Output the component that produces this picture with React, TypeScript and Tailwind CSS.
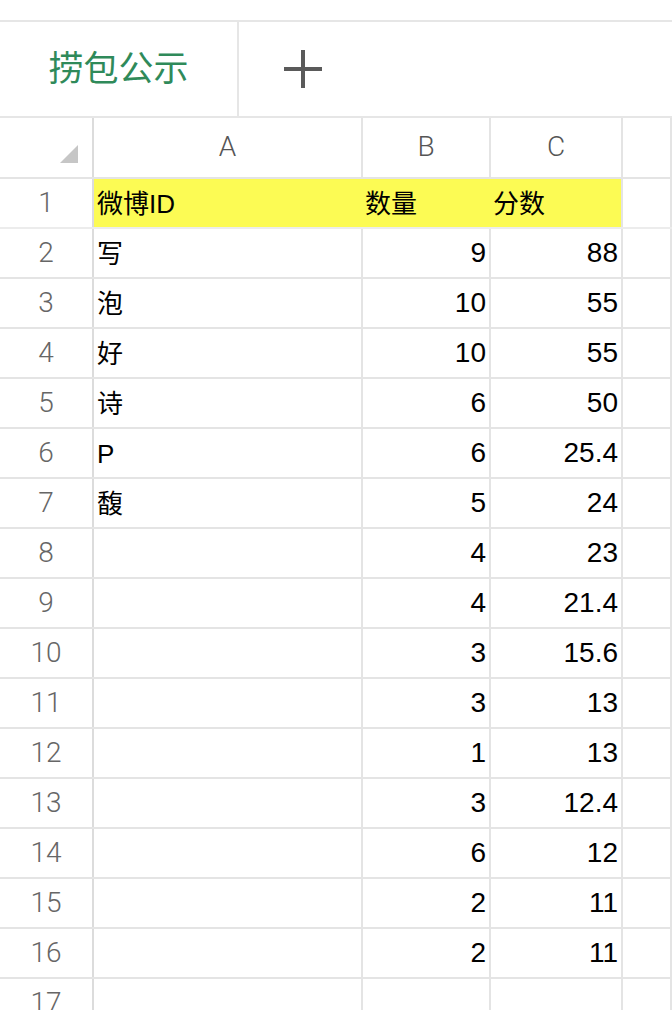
const rows: [string, string, string][] = [
  ['写', '9', '88'],
  ['泡', '10', '55'],
  ['好', '10', '55'],
  ['诗', '6', '50'],
  ['P', '6', '25.4'],
  ['馥', '5', '24'],
  ['', '4', '23'],
  ['', '4', '21.4'],
  ['', '3', '15.6'],
  ['', '3', '13'],
  ['', '1', '13'],
  ['', '3', '12.4'],
  ['', '6', '12'],
  ['', '2', '11'],
  ['', '2', '11'],
  ['', '', ''],
];

const font = { fontFamily: '"Liberation Sans", "Noto Sans CJK SC", sans-serif' };
const light = { fontFamily: 'Roboto, "Liberation Sans", sans-serif' };

const HeaderRow = () => (
  <div className="grid grid-cols-[94px_269px_128px_132px_49px] h-[61px] border-b-2 border-[#e4e4e4]">
    <div className="flex items-end justify-end pr-[14px] pb-[14px] border-r-2 border-[#dcdcdc]">
      <svg width="18" height="18" viewBox="0 0 18 18">
        <polygon points="18,0 18,18 0,18" fill="#c6c6c6" />
      </svg>
    </div>
    {['A', 'B', 'C', ''].map((l, i) => (
      <div
        key={i}
        className="flex items-center justify-center border-r-2 border-[#e4e4e4] text-[28px] font-light text-[#555] pb-[2px]"
        style={light}
      >
        {l}
      </div>
    ))}
  </div>
);

const App = () => {
  return (
    <div className="w-[672px] h-[1010px] overflow-hidden bg-white" style={font}>
      <div className="mt-[20px] flex h-[98px] border-y-2 border-[#e6e6e6]">
        <div className="w-[239px] flex items-center justify-center border-r-2 border-[#e6e6e6] text-[35px] text-[#2f8a5a]">
          捞包公示
        </div>
        <div className="w-[128px] flex items-center justify-center">
          <svg width="38" height="38" viewBox="0 0 38 38">
            <line x1="0" y1="19" x2="38" y2="19" stroke="#5a5a5a" strokeWidth="4" />
            <line x1="19" y1="0" x2="19" y2="38" stroke="#5a5a5a" strokeWidth="4" />
          </svg>
        </div>
      </div>

      <HeaderRow />

      <div className="grid grid-cols-[94px_269px_128px_132px_49px] h-[50px] border-b-2 border-[#ececec] text-[26px] text-black">
        <div className="flex items-center justify-center border-r-2 border-[#dcdcdc] text-[28px] font-light text-[#666]" style={light}>
          1
        </div>
        <div className="flex items-center pl-[3px] pt-[2px] bg-[#fcfb54]">微博ID</div>
        <div className="flex items-center pl-[2px] pt-[2px] bg-[#fcfb54]">数量</div>
        <div className="flex items-center pl-[2px] pt-[2px] bg-[#fcfb54] border-r-2 border-[#e4e4e4]">分数</div>
        <div className="border-r-2 border-[#e4e4e4]"></div>
      </div>

      {rows.map((r, i) => (
        <div
          key={i}
          className="grid grid-cols-[94px_269px_128px_132px_49px] h-[50px] border-b-2 border-[#e4e4e4] text-[26px] text-black"
        >
          <div className="flex items-center justify-center border-r-2 border-[#dcdcdc] text-[28px] font-light text-[#666]" style={light}>
            {i + 2}
          </div>
          <div className="flex items-center pl-[3px] pt-[2px] border-r-2 border-[#e4e4e4]">{r[0]}</div>
          <div className="flex items-center justify-end pr-[3px] border-r-2 border-[#e4e4e4] text-[28px]">{r[1]}</div>
          <div className="flex items-center justify-end pr-[3px] border-r-2 border-[#e4e4e4] text-[28px]">{r[2]}</div>
          <div className="border-r-2 border-[#e4e4e4]"></div>
        </div>
      ))}
    </div>
  );
};

export default App;
